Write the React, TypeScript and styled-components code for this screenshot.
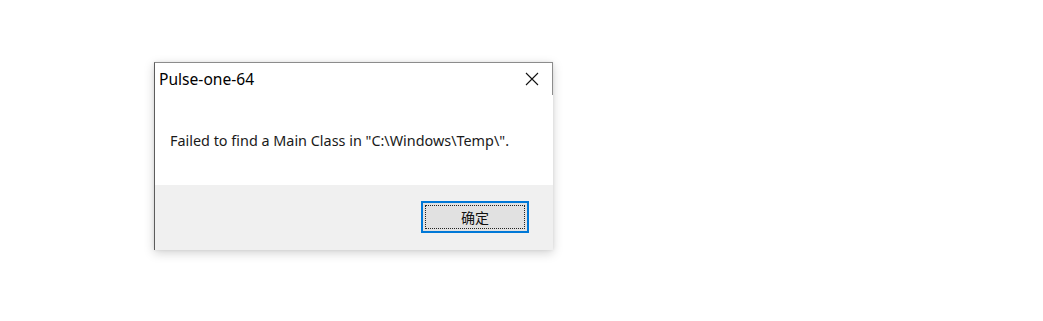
import React from "react";
import styled, { createGlobalStyle } from "styled-components";

const GlobalStyle = createGlobalStyle`
  html, body {
    margin: 0;
    padding: 0;
    background: #ffffff;
  }
  body {
    font-family: "Noto Sans", "Noto Sans CJK SC", sans-serif;
  }
`;

const App = () => {
  return (
    <Page>
      <GlobalStyle />
      <Dialog>
        <TitleBar>
          <Title>Pulse-one-64</Title>
          <CloseButton aria-label="Close">
            <svg width="14" height="14" viewBox="0 0 14 14">
              <path d="M1 1 L13 13 M13 1 L1 13" stroke="#111" strokeWidth="1.1" />
            </svg>
          </CloseButton>
        </TitleBar>
        <Body>
          <Message>Failed to find a Main Class in "C:\Windows\Temp\".</Message>
        </Body>
        <Footer>
          <OkButton>
            <FocusRing>确定</FocusRing>
          </OkButton>
        </Footer>
      </Dialog>
    </Page>
  );
};

export default App;

const Page = styled.div`
  padding: 62px 0 0 154px;
  height: 321px;
  box-sizing: border-box;
`;

const Dialog = styled.div`
  width: 399px;
  height: 188px;
  box-sizing: border-box;
  display: flex;
  flex-direction: column;
  background: #ffffff;
  border-top: 1px solid #8c8c8c;
  border-left: 1px solid #5c5c5c;
  box-shadow: 0 3px 10px rgba(0, 0, 0, 0.18), 0 0 3px rgba(0, 0, 0, 0.08);
`;

const TitleBar = styled.div`
  height: 32px;
  display: flex;
  align-items: center;
  justify-content: space-between;
  border-right: 1px solid #8c8c8c;
  padding-left: 4px;
`;

const Title = styled.span`
  font-size: 15.6px;
  color: #000;
  margin-top: -1px;
`;

const CloseButton = styled.div`
  width: 40px;
  height: 32px;
  display: flex;
  align-items: center;
  justify-content: center;
`;

const Body = styled.div`
  height: 90px;
  display: flex;
  align-items: center;
  padding-left: 15px;
`;

const Message = styled.span`
  font-size: 14.4px;
  color: #1a1a1a;
  margin-top: 1px;
`;

const Footer = styled.div`
  flex: 1;
  background: #f0f0f0;
  display: flex;
  justify-content: flex-end;
  align-items: flex-start;
  padding: 16px 24px 0 0;
`;

const OkButton = styled.div`
  width: 108px;
  height: 32px;
  box-sizing: border-box;
  border: 2px solid #0078d7;
  background: #e1e1e1;
  padding: 2px;
`;

const FocusRing = styled.div`
  height: 100%;
  box-sizing: border-box;
  border: 1px dotted #222;
  display: flex;
  align-items: center;
  justify-content: center;
  font-size: 14px;
  color: #111;
`;
